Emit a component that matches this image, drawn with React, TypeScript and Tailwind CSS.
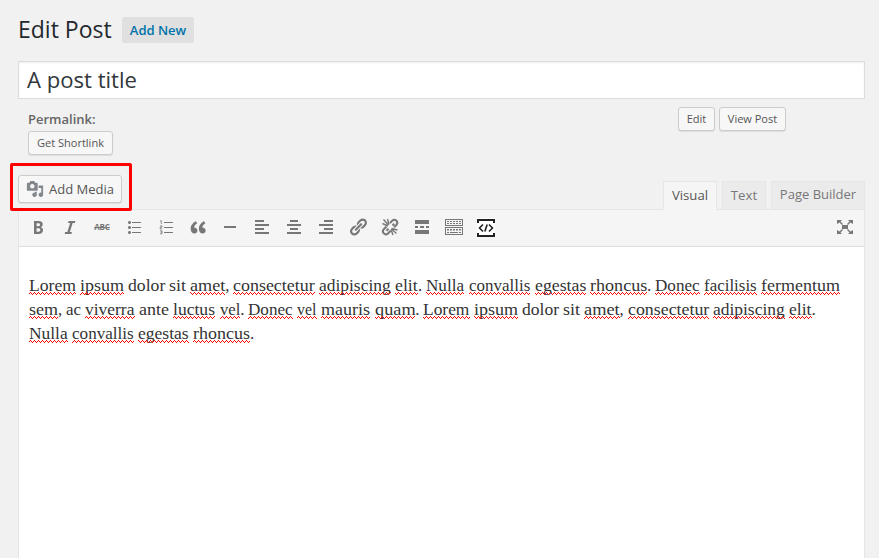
import { useLayoutEffect, useRef, type ReactNode } from "react";

type Word = [text: string, start: number, end: number, marked: boolean, tail?: string];

const lines: Word[][] = [
  [
    ["Lorem", 29, 76, true], ["ipsum", 79.7, 123.7, true], ["dolor", 127.7, 165, false], ["sit", 169, 186, false],
    ["amet", 190, 225.3, true, ","], ["consectetur", 233.3, 315, true], ["adipiscing", 319.3, 391, true],
    ["elit", 395.3, 418, true, "."], ["Nulla", 426.3, 464.3, true], ["convallis", 468.7, 530, true],
    ["egestas", 534.7, 586, true], ["rhoncus", 589.7, 647, true, "."], ["Donec", 655.3, 700, true],
    ["facilisis", 704, 756.7, true], ["fermentum", 761, 840, true],
  ],
  [
    ["sem", 29, 58, true, ","], ["ac", 66, 81, false], ["viverra", 85.3, 134.7, true], ["ante", 139, 169, false],
    ["luctus", 173.3, 215.3, true], ["vel", 220, 240.3, true, "."], ["Donec", 248.3, 293, true], ["vel", 297.3, 316.7, true],
    ["mauris", 321.3, 370.3, true], ["quam", 374.7, 415.3, true, "."], ["Lorem", 423.3, 469.7, true],
    ["ipsum", 474, 518, true], ["dolor", 522, 559, false], ["sit", 563, 580, false], ["amet", 584, 619.7, true, ","],
    ["consectetur", 627.7, 709, true], ["adipiscing", 713.3, 785, true], ["elit", 789.3, 811.7, true, "."],
  ],
  [
    ["Nulla", 29, 67.7, true], ["convallis", 72, 133.7, true], ["egestas", 138, 188.7, true], ["rhoncus", 193, 250, true, "."],
  ],
];

function Squiggle({ start, end }: { start: number; end: number }) {
  const from = Math.round(start);
  const width = Math.round(end) - from;
  const rows = [2, 1, 0, 1];
  let d = "";
  for (let x = 0; x < width; x++) d += `M${x} ${rows[(x + from) % 4]}h1v1h-1z`;
  return (
    <svg className="absolute top-[18px] h-[3px] overflow-hidden" style={{ left: from - start }} width={width} height="3">
      <path d={d} fill="#f00" shapeRendering="crispEdges" />
    </svg>
  );
}

function FittedWord({ word, gap }: { word: Word; gap: number }) {
  const [text, start, end, marked, tail] = word;
  const ref = useRef<HTMLSpanElement>(null);
  const width = end - start;
  useLayoutEffect(() => {
    const fit = () => {
      const el = ref.current;
      if (!el) return;
      el.style.transform = "none";
      const natural = el.getBoundingClientRect().width;
      el.style.transform = `scaleX(${width / natural})`;
    };
    fit();
    document.fonts.ready.then(fit);
  }, [text, width]);
  return (
    <span className="relative flex shrink-0 whitespace-nowrap" style={{ width, marginLeft: gap }}>
      <span className="block shrink-0" style={{ width }}>
        <span ref={ref} className="inline-block origin-left">{text}</span>
      </span>
      {tail}
      {marked && <Squiggle start={start} end={end} />}
    </span>
  );
}

function Tool({ children }: { children: ReactNode }) {
  return (
    <span className="flex h-6 w-8 shrink-0 items-center justify-center">
      <svg width="20" height="20" viewBox="0 0 20 20" fill="#777" stroke="none">
        {children}
      </svg>
    </span>
  );
}

const btn = "flex items-center justify-center rounded-[3px] border border-[#ccc] bg-[#f7f7f7] text-[#555] shadow-[0_1px_0_rgba(0,0,0,0.08)] whitespace-nowrap";

export default function App() {
  return (
    <div className="flex h-[558px] w-[879px] flex-col overflow-hidden bg-[#f1f1f1] pl-[18px] pr-[14px] font-['Open_Sans',sans-serif] text-[13px]">
      <header className="flex h-[61px] shrink-0 items-start pt-[15px]">
        <h1 className="w-[104px] whitespace-nowrap text-[23px] leading-[29px] text-[#23282d]">Edit Post</h1>
        <a className="mt-[2px] flex h-[26px] w-[72px] items-center justify-center rounded-[2px] bg-[#e0e0e0] pt-px text-[13px] font-semibold text-[#0073aa]">Add New</a>
      </header>
      <div className="flex h-[38px] shrink-0 items-center border border-[#ddd] bg-white px-2 text-[22.1px] text-[#32373c] shadow-[inset_0_1px_2px_rgba(0,0,0,0.07)]">A post title</div>
      <section className="flex h-[64px] shrink-0 justify-between pl-[10px] pt-2">
        <div>
          <div className="h-6 leading-6 font-semibold text-[#666]">Permalink:</div>
          <div className={`${btn} h-6 w-[85px] text-[11px]`}>Get Shortlink</div>
        </div>
        <div className="mr-[79px] flex gap-1">
          <div className={`${btn} h-6 w-[37px] text-[11px]`}>Edit</div>
          <div className={`${btn} h-6 w-[67px] text-[11px]`}>View Post</div>
        </div>
      </section>
      <section className="relative flex h-[46px] shrink-0 justify-between">
        <div className="absolute -left-[8px] top-0 z-20 h-12 w-[122px] rounded-[2px] border-[3px] border-[#f00]" />
        <div className={`${btn} mt-3 h-7 w-[104px] gap-[5px]`}>
          <svg width="18" height="18" viewBox="0 0 20 20" fill="#82878c">
            <path fillRule="evenodd" d="M13 11V4c0-.55-.45-1-1-1h-1.670L9 1H5L3.670 3H2c-.55 0-1 .45-1 1v7c0 .55.45 1 1 1h10c.55 0 1-.45 1-1zM7 4.500a2.500 2.500 0 1 1 0 5 2.500 2.500 0 0 1 0-5z" />
            <path d="M14 6h5v10.500c0 1.380-1.120 2.500-2.500 2.500S14 17.880 14 16.500s1.120-2.500 2.500-2.500c.17 0 .34.02.5.050V9h-3V6zm-4 8.050V13h2v3.500c0 1.380-1.120 2.500-2.500 2.500S7 17.880 7 16.500 8.120 14 9.500 14c.17 0 .34.02.5.050z" />
          </svg>
          <span className="pt-px">Add Media</span>
        </div>
        <div className="z-10 flex items-end text-[13.2px]">
          <div className="-mb-px mr-[5px] flex h-[29px] w-[54px] items-center justify-center border border-b-0 border-[#e5e5e5] bg-[#f5f5f5] text-[#555]">Visual</div>
          <div className="mr-[5px] flex h-[28px] w-[44px] items-center justify-center border border-b-0 border-[#e5e5e5] bg-[#ebebeb] text-[#777]">Text</div>
          <div className="flex h-[28px] w-[94px] items-center justify-center border border-b-0 border-[#e5e5e5] bg-[#ebebeb] pb-[2px] text-[13px] text-[#777]">Page Builder</div>
        </div>
      </section>
      <main className="flex min-h-0 grow flex-col border border-b-0 border-[#e5e5e5] bg-white">
        <div className="flex h-[37px] shrink-0 items-center border-b border-[#ddd] bg-[#f5f5f5] pb-[2px] pl-[3px] pr-[3px]">
          <Tool><path d="M6 4v13h4.540c1.370 0 2.460-.33 3.260-1 .8-.66 1.200-1.580 1.200-2.770 0-.84-.17-1.510-.51-2.010s-.9-.85-1.670-1.030v-.09c.57-.1 1.020-.4 1.360-.9s.51-1.130.51-1.910c0-1.140-.39-1.980-1.170-2.500C12.750 4.260 11.500 4 9.780 4H6zm2.570 5.150V6.260h1.360c.73 0 1.270.11 1.610.32.34.22.51.58.51 1.070 0 .54-.16.92-.47 1.150s-.82.35-1.510.35h-1.500zm0 2.190h1.600c1.440 0 2.160.53 2.160 1.610 0 .6-.17 1.050-.51 1.340s-.86.43-1.570.43H8.570v-3.380z" /></Tool>
          <Tool><path d="M14.780 6h-2.130l-2.800 9h2.120l-.62 2H4.600l.62-2h2.140l2.800-9H8.030l.62-2h6.750z" /></Tool>
          <span className="flex w-8 justify-center text-[8px] font-bold tracking-[-0.1px] text-[#777] line-through">ABC</span>
          <Tool><path d="M5.500 7C4.670 7 4 6.330 4 5.500 4 4.680 4.670 4 5.500 4 6.320 4 7 4.680 7 5.500 7 6.330 6.320 7 5.500 7zM8 5h9v1H8V5zm-2.500 7c-.83 0-1.500-.67-1.500-1.500C4 9.680 4.670 9 5.500 9c.82 0 1.500.68 1.500 1.500 0 .83-.68 1.500-1.500 1.500zM8 10h9v1H8v-1zm-2.500 7c-.83 0-1.500-.67-1.500-1.500 0-.82.67-1.500 1.500-1.500.82 0 1.500.68 1.500 1.500 0 .83-.68 1.500-1.500 1.500zM8 15h9v1H8v-1z" /></Tool>
          <Tool>
            <path d="M8 5h9v1H8zM8 10h9v1H8zM8 15h9v1H8z" />
            <path d="M4 4.200 5.300 3.600V7M4 8.900h2v1.400H4.200V12h2M4 13.900h2v1.300H4.500M6 15.200v1.600H4" fill="none" stroke="#777" strokeWidth=".8" />
          </Tool>
          <Tool><path d="M8.540 12.740c0-.87-.24-1.610-.72-2.220-.73-.92-2.140-1.030-2.960-.85-.34-1.930 1.300-4.390 3.420-5.450L6.650 1.940C3.450 3.460.31 6.960.850 11.370 1.190 14.160 2.800 16 5.080 16c1 0 1.830-.29 2.480-.88.66-.59.98-1.380.98-2.380zm9.430 0c0-.87-.24-1.610-.72-2.220-.73-.92-2.140-1.030-2.960-.85-.34-1.930 1.300-4.390 3.420-5.450l-1.630-2.280c-3.200 1.520-6.340 5.020-5.800 9.430.34 2.790 1.950 4.630 4.230 4.630 1 0 1.830-.29 2.480-.88.66-.59.980-1.380.980-2.380z" transform="translate(2 2.500) scale(.87)" /></Tool>
          <Tool><path d="M4 9h12v2H4z" /></Tool>
          <Tool><path d="M12 5V3H3v2h9zm5 4V7H3v2h14zm-5 4v-2H3v2h9zm5 4v-2H3v2h14z" /></Tool>
          <Tool><path d="M14 5V3H6v2h8zm3 4V7H3v2h14zm-3 4v-2H6v2h8zm3 4v-2H3v2h14z" /></Tool>
          <Tool><path d="M17 5V3H8v2h9zm0 4V7H3v2h14zm0 4v-2H8v2h9zm0 4v-2H3v2h14z" /></Tool>
          <Tool><path d="M17.740 2.760c1.680 1.690 1.680 4.410 0 6.100l-1.530 1.520c-1.120 1.120-2.700 1.470-4.140 1.090l2.620-2.610.76-.77.760-.76c.84-.84.84-2.200 0-3.040-.84-.85-2.200-.85-3.040 0l-.77.76-3.380 3.380c-.37-1.440-.02-3.020 1.100-4.140l1.520-1.530c1.690-1.680 4.420-1.680 6.100 0zM8.590 13.430l5.340-5.340c.42-.42.420-1.100 0-1.520-.44-.43-1.130-.39-1.530 0l-5.330 5.340c-.42.42-.42 1.100 0 1.520.44.430 1.130.390 1.520 0zm-.76 2.290l4.140-4.150c.38 1.440.03 3.020-1.090 4.140l-1.520 1.530c-1.690 1.680-4.410 1.680-6.100 0-1.680-1.680-1.680-4.420 0-6.100l1.530-1.520c1.120-1.120 2.700-1.470 4.140-1.100l-4.140 4.150c-.85.84-.85 2.200 0 3.050.84.84 2.200.84 3.040 0z" /></Tool>
          <Tool><g fill="none" stroke="#777"><path d="m10 6 2.200-2.200c3-2.600 6.800 1.200 4.200 4.200L14 10.400M12.500 8.500l1.800-1.800M6.500 9.500 3.800 12.200c-2.600 3 1.200 6.800 4.200 4.200l2.700-2.700M6.500 13.700l2-2" strokeWidth="2" /><path d="M2.500 6.500 8 9M3.500 2.500 8.500 8M7.500 2 9 7.500M11.500 11.500 17.500 13M11.500 12l5 4.500M11 12.500l2 5.500" strokeWidth="1.400" /></g></Tool>
          <Tool><path d="M17 7V3H3v4h14zM6 11V9H3v2h3zm6 0V9H8v2h4zm5 0V9h-3v2h3zm0 6v-4H3v4h14z" /></Tool>
          <Tool><path fillRule="evenodd" d="M1 2h18v7H1zm1 1v5h16V3zM1 10h18v8H1zm1 1v6h16v-6zM3 4h2v1H3zm3 0h2v1H6zm3 0h2v1H9zm3 0h2v1h-2zm3 0h2v1h-2zM3 6h2v1H3zm3 0h2v1H6zm3 0h2v1H9zm3 0h2v1h-2zm3 0h2v1h-2zM3 12h2v1.500H3zm3 0h2v1.500H6zm3 0h2v1.500H9zm3 0h2v1.500h-2zm3 0h2v1.500h-2zM3 15h2v1H3zm3 0h8v1H6zm9 0h2v1h-2z" /></Tool>
          <Tool><path fill="#fff" d="M1 1h18v19H1z" /><path d="M2 6V3h16v3M2 16v3h16v-3" fill="none" stroke="#222" strokeWidth="2" /><path d="M7 7.500l-3.500 3.500L7 14.500M13 7.500l3.500 3.500-3.500 3.500M11.200 7.500l-2.400 7" fill="none" stroke="#222" strokeWidth="1.600" /></Tool>
          <span className="grow" />
          <Tool><path d="M7 8h6v4H7zM2 3h5L5.500 4.500 8 7 7 8 4.500 5.500 2 7zM18 3h-5l1.500 1.500L12 7l1 1 2.500-2.500L18 7zM2 17h5l-1.500-1.500L8 13l-1-1-2.500 2.500L2 13zM18 17h-5l1.500-1.500L12 13l1-1 2.500 2.500L18 13z" /></Tool>
        </div>
        <div className="pl-[10px] pt-[27px] font-['Liberation_Serif',serif] text-[17px] leading-6 text-[#333]">
          {lines.map((line, row) => (
            <div key={row} className="flex h-6">
              {line.map((word, i) => <FittedWord key={i} word={word} gap={i ? word[1] - line[i - 1][2] : 0} />)}
            </div>
          ))}
        </div>
      </main>
    </div>
  );
}
